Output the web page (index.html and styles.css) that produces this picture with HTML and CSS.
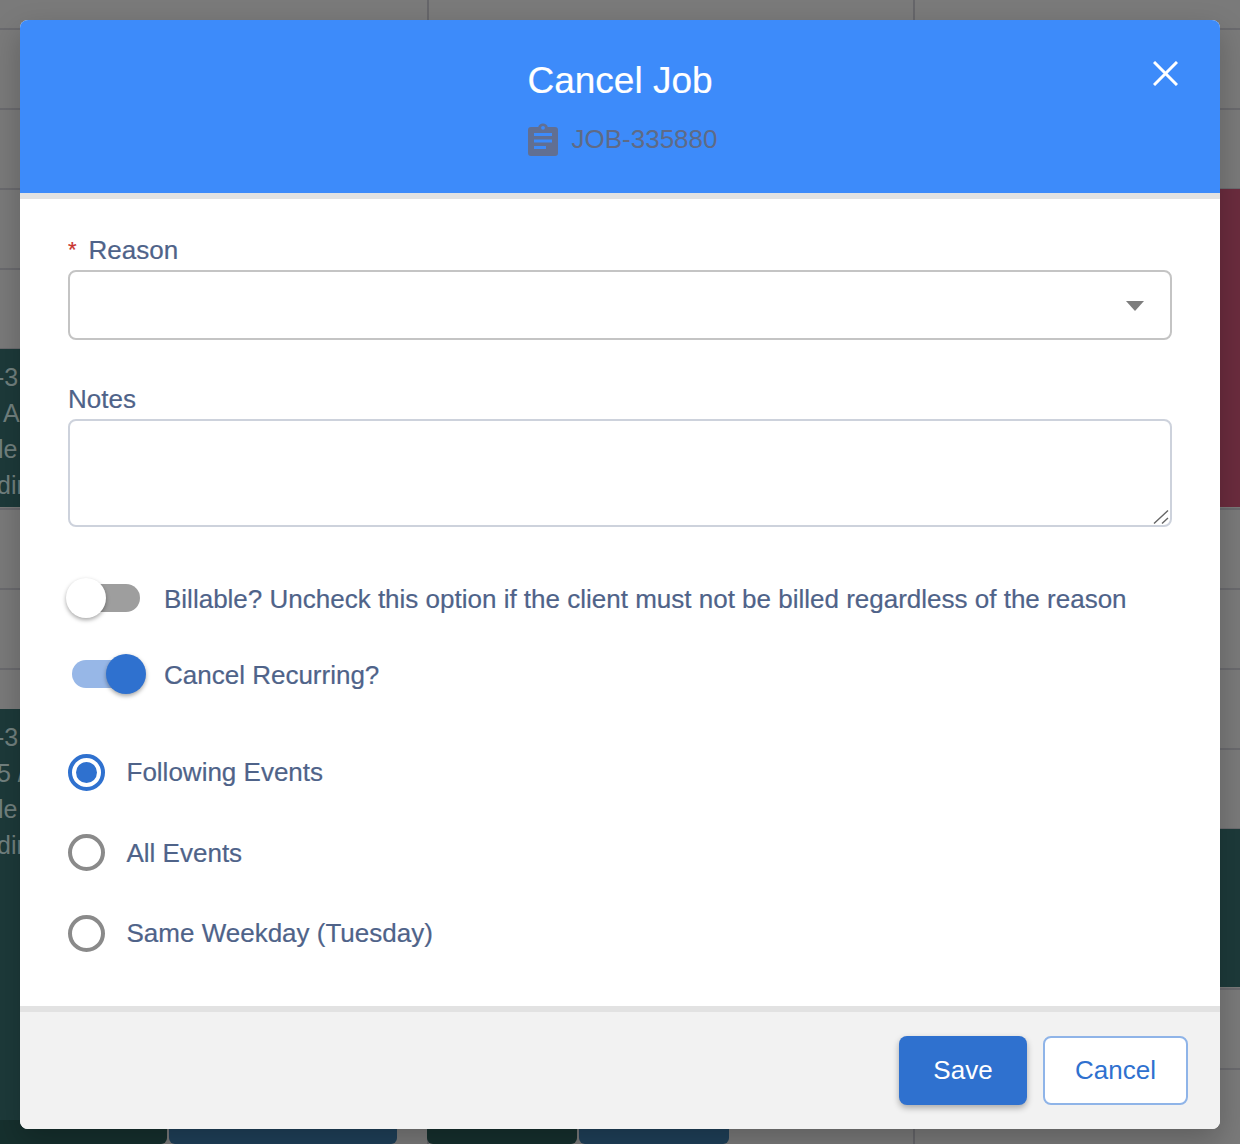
FILE: index.html
```html
<!DOCTYPE html>
<html lang="en">
<head>
<meta charset="utf-8">
<title>Cancel Job</title>
<link rel="stylesheet" href="styles.css">
</head>
<body>
<div class="backdrop" aria-hidden="true">
  <div class="vline v1"></div>
  <div class="vline v2"></div>
  <div class="event ev-left-a">
    <div class="ev-line ev-n">-3</div>
    <div class="ev-line ev-a">A</div>
    <div class="ev-line ev-l">le</div>
    <div class="ev-line ev-d">dir</div>
  </div>
  <div class="event ev-left-b">
    <div class="ev-line ev-n">-3</div>
    <div class="ev-line ev-f">5 /</div>
    <div class="ev-line ev-l">le</div>
    <div class="ev-line ev-d">dir</div>
  </div>
  <div class="event ev-maroon"></div>
  <div class="event ev-right"></div>
  <div class="event ev-b1"></div>
  <div class="event ev-b2"></div>
  <div class="event ev-b3"></div>
  <div class="event ev-b4"></div>
</div>

<main class="modal">
  <header class="modal-header">
    <h1 class="title">Cancel Job</h1>
    <div class="subtitle">
      <svg class="clip-icon" viewBox="0 0 30 33" width="30" height="33">
        <path fill="#616f92" d="M3 4h7.2a5 5 0 0 1 9.6 0H27a3 3 0 0 1 3 3v23a3 3 0 0 1-3 3H3a3 3 0 0 1-3-3V7a3 3 0 0 1 3-3z"/>
        <circle cx="15" cy="4.8" r="1.9" fill="#3d8bfa"/>
        <rect x="6" y="10" width="18" height="3" fill="#3d8bfa"/>
        <rect x="6" y="16.5" width="18" height="3" fill="#3d8bfa"/>
        <rect x="6" y="23" width="12" height="3" fill="#3d8bfa"/>
      </svg>
      <span class="job-id">JOB-335880</span>
    </div>
    <button class="close" aria-label="Close">
      <svg viewBox="0 0 25 25" width="25" height="25"><path d="M1 1l23 23M24 1L1 24" stroke="#fff" stroke-width="3" fill="none"/></svg>
    </button>
  </header>

  <section class="modal-body">
    <div class="field field-reason">
      <label class="label"><span class="req">*</span>Reason</label>
      <div class="select"><span class="caret"></span></div>
    </div>
    <div class="field field-notes">
      <label class="label">Notes</label>
      <div class="textarea">
        <svg class="grip" viewBox="0 0 16 14" width="16" height="14"><path d="M1 13.5L15 .5M9 13.5l6-5.5" stroke="#666" stroke-width="1.4" fill="none"/></svg>
      </div>
    </div>
    <div class="toggle-row row-billable">
      <span class="switch"><span class="thumb thumb-off"></span></span>
      <span class="toggle-label">Billable? Uncheck this option if the client must not be billed regardless of the reason</span>
    </div>
    <div class="toggle-row row-recurring">
      <span class="switch on"><span class="thumb thumb-on"></span></span>
      <span class="toggle-label">Cancel Recurring?</span>
    </div>
    <div class="radios">
      <div class="radio-row"><span class="radio checked"></span><span class="radio-label">Following Events</span></div>
      <div class="radio-row"><span class="radio"></span><span class="radio-label">All Events</span></div>
      <div class="radio-row"><span class="radio"></span><span class="radio-label">Same Weekday (Tuesday)</span></div>
    </div>
  </section>

  <footer class="modal-footer">
    <button class="btn btn-save">Save</button>
    <button class="btn btn-cancel">Cancel</button>
  </footer>
</main>
</body>
</html>
```
FILE: styles.css
```css
* { box-sizing: border-box; }
html, body { margin: 0; height: 1144px; overflow: hidden; }
body {
  padding: 20px;
  font-family: "Liberation Sans", Arial, sans-serif;
  position: relative;
}

/* dimmed calendar behind the dialog */
.backdrop {
  position: absolute;
  inset: 0;
  overflow: hidden;
  background-color: #7a7a7a;
  background-image:
    linear-gradient(to bottom, transparent 0, transparent 28px, #6a6a6e 28px, #6a6a6e 30px, transparent 30px),
    linear-gradient(to bottom, transparent 78px, #6a6a6e 78px, #6a6a6e 80px, transparent 80px);
  background-size: 100% 1144px, 100% 80px;
  background-position: 0 0, 0 30px;
}
.vline { position: absolute; top: 0; bottom: 0; width: 2px; background: #66666a; }
.v1 { left: 427px; }
.v2 { left: 913px; }
.event { position: absolute; background: #1d3a3a; }
.ev-left-a { left: 0; top: 349px; width: 20px; height: 158px; padding-top: 10px; }
.ev-left-b { left: 0; top: 709px; width: 20px; height: 435px; padding-top: 10px; }
.ev-line {
  height: 36px;
  line-height: 36px;
  font-size: 25px;
  color: #72817f;
  white-space: nowrap;
}
.ev-n { text-indent: -4px; }
.ev-a { text-indent: 3px; }
.ev-l { text-indent: -2px; }
.ev-f { text-indent: -3px; }
.ev-d { text-indent: -3px; }
.ev-maroon { left: 1220px; top: 189px; width: 20px; height: 318px; background: #6b2c3e; }
.ev-right { left: 1220px; top: 829px; width: 20px; height: 158px; }
.ev-b1 { left: 0; top: 1120px; width: 167px; height: 24px; background: #16302e; border-radius: 0 0 6px 0; }
.ev-b2 { left: 169px; top: 1120px; width: 228px; height: 24px; background: #1f4059; border-radius: 0 0 6px 6px; }
.ev-b3 { left: 427px; top: 1120px; width: 150px; height: 24px; background: #16302e; border-radius: 0 0 6px 6px; }
.ev-b4 { left: 579px; top: 1120px; width: 150px; height: 24px; background: #1f4059; border-radius: 0 0 6px 6px; }

/* dialog */
.modal {
  position: relative;
  width: 1200px;
  height: 1109px;
  display: flex;
  flex-direction: column;
  background: #fff;
  border-radius: 8px;
  overflow: hidden;
  box-shadow: 0 12px 30px rgba(0,0,0,.22);
}
.modal-header {
  position: relative;
  flex: none;
  height: 179px;
  padding-top: 39px;
  background: #3d8bfa;
  border-bottom: 6px solid #e2e2e2;
  display: flex;
  flex-direction: column;
  align-items: center;
}
.title {
  margin: 0;
  font-size: 37px;
  line-height: 44px;
  font-weight: 400;
  color: #fff;
  -webkit-text-stroke: 0.2px #fff;
}
.subtitle {
  margin-top: 19px;
  padding-left: 5px;
  display: flex;
  align-items: center;
  gap: 14px;
  font-size: 26px;
  line-height: 34px;
  color: #5f6a86;
}
.close {
  position: absolute;
  left: 1133px;
  top: 41px;
  padding: 0;
  width: 25px;
  height: 25px;
  border: 0;
  background: none;
  display: block;
}
.close svg { display: block; }

.modal-body {
  flex: 1;
  padding: 36px 48px 0;
  background: #fff;
}
.label {
  display: block;
  font-size: 26px;
  line-height: 30px;
  color: #4f6389;
  -webkit-text-stroke: 0.2px #4f6389;
}
.req {
  color: #c9342f;
  font-size: 22px;
  margin-right: 12px;
  vertical-align: 2px;
  -webkit-text-stroke: 0.2px #c9342f;
}
.select {
  position: relative;
  margin-top: 5px;
  height: 70px;
  border: 2px solid #c4c4c4;
  border-radius: 8px;
}
.caret {
  position: absolute;
  right: 26px;
  top: 29px;
  width: 0;
  height: 0;
  border-left: 9px solid transparent;
  border-right: 9px solid transparent;
  border-top: 10px solid #7d7d7d;
}
.field-notes { margin-top: 44px; }
.textarea {
  position: relative;
  margin-top: 5px;
  height: 108px;
  border: 2px solid #cdd2dc;
  border-radius: 8px;
}
.grip { position: absolute; right: 1px; bottom: 1px; }

.toggle-row {
  display: flex;
  align-items: center;
  height: 40px;
}
.row-billable { margin-top: 51px; }
.row-recurring { margin-top: 36px; }
.switch {
  position: relative;
  flex: none;
  display: block;
  width: 68px;
  height: 28px;
  margin-left: 4px;
  border-radius: 14px;
  background: #9e9e9e;
}
.switch.on { background: #97b7e7; }
.thumb {
  position: absolute;
  top: -6px;
  width: 40px;
  height: 40px;
  border-radius: 50%;
  box-shadow: 0 2px 4px rgba(0,0,0,.35);
}
.thumb-off { left: -6px; background: #fff; }
.thumb-on { left: 34px; background: #2f71cf; }
.toggle-label {
  margin-left: 24px;
  padding-top: 2px;
  font-size: 26px;
  line-height: 32px;
  color: #4f6389;
  white-space: nowrap;
  -webkit-text-stroke: 0.2px #4f6389;
}

.radios { margin-top: 60px; }
.radio-row {
  display: flex;
  align-items: center;
  height: 36px;
  margin-bottom: 44.5px;
}
.radio-row:last-child { margin-bottom: 0; }
.radio {
  flex: none;
  position: relative;
  width: 37px;
  height: 37px;
  border: 4px solid #8a8a8a;
  border-radius: 50%;
}
.radio.checked { border-color: #2f71cf; }
.radio.checked::after {
  content: "";
  position: absolute;
  inset: 4px;
  border-radius: 50%;
  background: #2f71cf;
}
.radio-label {
  margin-left: 21.5px;
  font-size: 26px;
  line-height: 32px;
  color: #4f6389;
  -webkit-text-stroke: 0.2px #4f6389;
}

.modal-footer {
  flex: none;
  height: 123px;
  padding: 24px 32px 0 0;
  background: #f2f2f2;
  border-top: 6px solid #e2e2e2;
  display: flex;
  justify-content: flex-end;
  align-items: flex-start;
  gap: 16px;
}
.btn {
  height: 69px;
  font-family: inherit;
  font-size: 26px;
  border-radius: 8px;
  padding: 0;
}
.btn-save {
  width: 128px;
  border: 0;
  background: #2f71cf;
  color: #fff;
  box-shadow: 0 3px 6px rgba(0,0,0,.3);
}
.btn-cancel {
  width: 145px;
  border: 2px solid #8fb4e8;
  background: #fff;
  color: #2f71cf;
}
```
